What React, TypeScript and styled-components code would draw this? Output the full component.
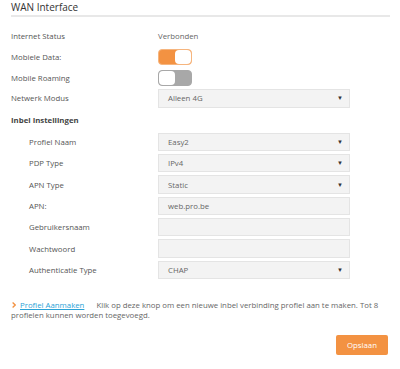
import React from 'react';
import styled, {createGlobalStyle} from 'styled-components';

const GlobalStyle = createGlobalStyle`
    body {
        margin: 0;
        background: #fff;
        font-family: "Open Sans", "Liberation Sans", sans-serif;
        color: #555;
    }
`

const orange = '#f39242';

type Field = {label: string; value?: string; select?: boolean};

const profileFields: Field[] = [
    {label: 'Profiel Naam', value: 'Easy2', select: true},
    {label: 'PDP Type', value: 'IPv4', select: true},
    {label: 'APN Type', value: 'Static', select: true},
    {label: 'APN:', value: 'web.pro.be'},
    {label: 'Gebruikersnaam'},
    {label: 'Wachtwoord'},
    {label: 'Authenticatie Type', value: 'CHAP', select: true},
];

const Toggle = ({on}: {on: boolean}) => (
    <StyledToggle $on={on}>
        <Knob $on={on}/>
    </StyledToggle>
);

const Input = ({value, select}: {value?: string; select?: boolean}) => (
    <Box>
        <span>{value}</span>
        {select && <Caret>▼</Caret>}
    </Box>
);

export default function App() {
    return (
        <Page>
            <GlobalStyle/>
            <Title>WAN Interface</Title>
            <Rows>
                <Row>
                    <Label>Internet Status</Label>
                    <Value>Verbonden</Value>
                </Row>
                <Row>
                    <Label>Mobiele Data:</Label>
                    <Toggle on/>
                </Row>
                <Row>
                    <Label>Mobile Roaming</Label>
                    <Toggle on={false}/>
                </Row>
                <Row>
                    <Label>Netwerk Modus</Label>
                    <Input value="Alleen 4G" select/>
                </Row>
            </Rows>
            <SubTitle>Inbel Instellingen</SubTitle>
            <SubRows>
                {profileFields.map(f => (
                    <SubRow key={f.label}>
                        <Label>{f.label}</Label>
                        <Input value={f.value} select={f.select}/>
                    </SubRow>
                ))}
            </SubRows>
            <Note>
                <Chevron width="4" height="6" viewBox="0 0 4 6">
                    <path d="M0.6 0.5 L3.2 3 L0.6 5.5" fill="none" stroke={orange} strokeWidth="1.3"/>
                </Chevron>
                <NoteLink>Profiel Aanmaken</NoteLink>
                Klik op deze knop om een nieuwe inbel verbinding profiel aan te maken. Tot 8 profielen kunnen worden toegevoegd.
            </Note>
            <Footer>
                <SaveButton>Opslaan</SaveButton>
            </Footer>
        </Page>
    );
}

const Page = styled.div`
    width: 379px;
    padding: 0 0 0 11px;
`

const Title = styled.h1`
    margin: 0;
    padding-top: 1px;
    height: 14px;
    font-size: 10px;
    line-height: 12px;
    font-weight: 400;
    color: #333;
    border-bottom: 2px solid #e8e8e8;
`

const Rows = styled.div`
    display: flex;
    flex-direction: column;
    padding-top: 9px;
`

const Row = styled.div`
    display: grid;
    grid-template-columns: 147px 192px;
    align-items: center;
    height: 20.7px;
`

const SubRows = styled.div`
    display: flex;
    flex-direction: column;
    padding-top: 6px;
`

const SubRow = styled(Row)`
    grid-template-columns: 129px 192px;
    padding-left: 18px;
    height: 21.33px;
`

const Label = styled.span`
    font-size: 7.8px;
    color: #555;
`

const Value = styled.span`
    font-size: 7.8px;
    color: #666;
`

const SubTitle = styled.div`
    margin-top: 6.5px;
    font-size: 7.8px;
    font-weight: 700;
    color: #444;
`

const StyledToggle = styled.div<{$on: boolean}>`
    width: 34px;
    height: 16px;
    box-sizing: border-box;
    border-radius: 4px;
    display: flex;
    justify-content: ${p => (p.$on ? 'flex-end' : 'flex-start')};
    background: ${p => (p.$on ? orange : '#a8a8a8')};
    border: 1px solid ${p => (p.$on ? '#f6b57e' : '#a8a8a8')};
`

const Knob = styled.div<{$on: boolean}>`
    width: 16px;
    height: 100%;
    background: #fff;
    border-radius: 4px;
`

const Box = styled.div`
    height: 18.5px;
    box-sizing: border-box;
    display: flex;
    align-items: center;
    justify-content: space-between;
    padding: 0 6px 0 9px;
    background: #f3f3f3;
    border: 1px solid #e4e4e4;
    font-size: 7.8px;
    color: #666;
`

const Caret = styled.span`
    font-size: 6px;
    color: #333;
`

const Note = styled.p`
    margin: 19px 10px 0 0;
    font-size: 7.8px;
    line-height: 10px;
    color: #666;
`

const Chevron = styled.svg`
    margin: 0 4px 0 1px;
    vertical-align: 0;
`

const NoteLink = styled.a`
    color: #2aa2d6;
    text-decoration: underline;
    margin-right: 12px;
`

const Footer = styled.div`
    display: flex;
    justify-content: flex-end;
    padding: 15px 2px 0 0;
`

const SaveButton = styled.button`
    width: 52px;
    height: 20px;
    border: none;
    border-radius: 2px;
    background: ${orange};
    color: #fff;
    font-family: "Open Sans", "Liberation Sans", sans-serif;
    font-size: 7.8px;
    padding: 0;
`
